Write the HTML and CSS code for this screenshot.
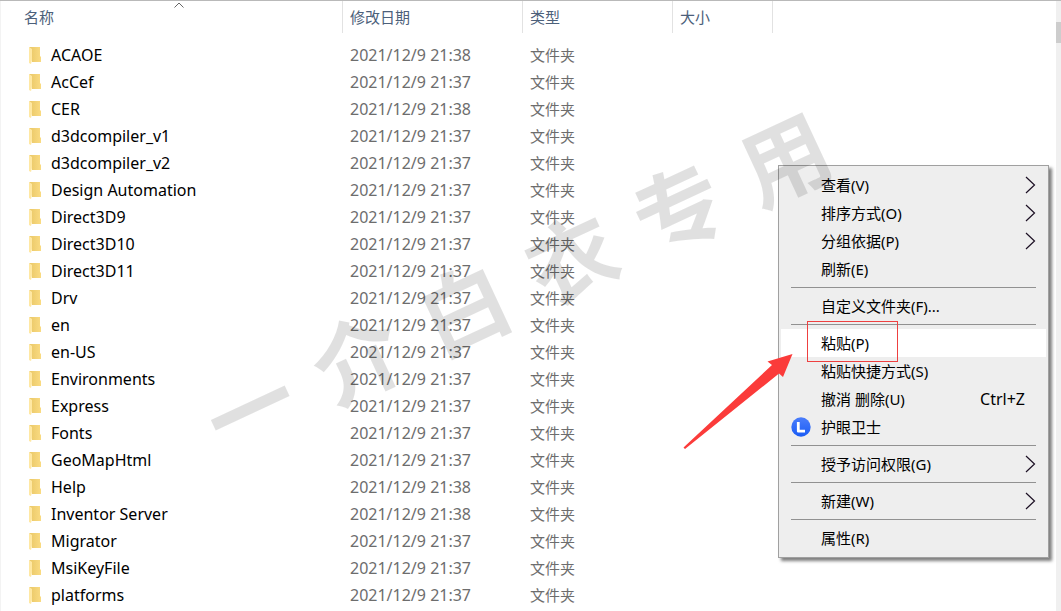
FILE: index.html
```html
<!DOCTYPE html>
<html lang="zh-CN">
<head>
<meta charset="utf-8">
<title>文件夹</title>
<link rel="stylesheet" href="styles.css">
</head>
<body>
<svg class="defs" aria-hidden="true">
  <defs>
    <linearGradient id="back" x1="0" x2="1"><stop offset="0" stop-color="#e9c766"/><stop offset="1" stop-color="#fadb82"/></linearGradient>
    <linearGradient id="blue" x1="0" x2="0" y1="0" y2="1"><stop offset="0" stop-color="#4a7dfb"/><stop offset="1" stop-color="#1a5cf5"/></linearGradient>
    <symbol id="folder" viewBox="0 0 13 18">
      <path d="M1 0h11v9l1 1v5H4V4z" fill="url(#back)"/>
      <path d="M1 0l3 2v11l-1 4-2-1z" fill="#ffe8a3"/>
    </symbol>
    <symbol id="chevron" viewBox="0 0 11 18"><path d="M1 1l8.500 8L1 17" fill="none" stroke="#1c1024" stroke-width="1.200"/></symbol>
  </defs>
</svg>
<div class="explorer">
  <main class="list">
    <table class="files">
      <thead>
        <tr>
          <th class="name" scope="col">名称<svg class="sort" viewBox="0 0 10 6" aria-hidden="true"><path d="M.500 5.500L5 1l4.500 4.500" fill="none" stroke="#666"/></svg></th>
          <th class="date" scope="col">修改日期</th>
          <th class="type" scope="col">类型</th>
          <th class="size" scope="col">大小</th>
        </tr>
      </thead>
      <tbody id="rows"></tbody>
    </table>
  </main>
  <div class="scrollbar"><div class="thumb"></div></div>

  <div class="menu" role="menu">
    <button class="item" role="menuitem">查看(V)<svg class="chevron"><use href="#chevron"/></svg></button>
    <button class="item" role="menuitem">排序方式(O)<svg class="chevron"><use href="#chevron"/></svg></button>
    <button class="item" role="menuitem">分组依据(P)<svg class="chevron"><use href="#chevron"/></svg></button>
    <button class="item" role="menuitem">刷新(E)</button>
    <hr class="rule">
    <button class="item" role="menuitem">自定义文件夹(F)...</button>
    <hr class="rule">
    <button class="item active" role="menuitem">粘贴(P)<span class="marker"></span></button>
    <button class="item" role="menuitem">粘贴快捷方式(S)</button>
    <button class="item" role="menuitem">撤消 删除(U)<span class="shortcut">Ctrl+Z</span></button>
    <button class="item" role="menuitem"><svg class="badge" viewBox="0 0 20 20" aria-hidden="true"><circle cx="10" cy="10" r="9.700" fill="url(#blue)"/><path d="M7.300 5v9.200H14" fill="none" stroke="#fff" stroke-width="2.800" stroke-linejoin="round"/></svg>护眼卫士</button>
    <hr class="rule">
    <button class="item" role="menuitem">授予访问权限(G)<svg class="chevron"><use href="#chevron"/></svg></button>
    <hr class="rule">
    <button class="item" role="menuitem">新建(W)<svg class="chevron"><use href="#chevron"/></svg></button>
    <hr class="rule">
    <button class="item" role="menuitem">属性(R)</button>
  </div>

  <div class="watermark"><span>一</span><span>介</span><span>白</span><span>衣</span><span>专</span><span>用</span></div>
  <svg class="arrow" viewBox="0 0 110 96" aria-hidden="true"><path d="M109.500 1L84.500 8.500 89 12 .500 94.500 2 96 96 20.500 100 24z" fill="#fb3b3a"/></svg>
</div>
<script src="files.js"></script>
</body>
</html>
```
FILE: styles.css
```css
* { box-sizing: border-box; }
body {
  margin: 0;
  background: #fff;
  font: 15px/27px "Noto Sans", "Noto Sans CJK SC", sans-serif;
  color: #000;
}
.defs { position: absolute; width: 0; height: 0; }
.explorer {
  position: relative;
  display: flex;
  height: 100vh;
  overflow: hidden;
  border-top: 1px solid #b9b9b9;
}
.list { flex: 1; border-left: 1px solid #f3f3f3; }
.files { border-collapse: separate; border-spacing: 0; table-layout: fixed; width: 772px; }
.files th {
  height: 32px;
  padding: 0 0 0 7px;
  border-right: 1px solid #e2e2e2;
  font-weight: 400;
  text-align: left;
  color: #4c607a;
}
.files th.name { position: relative; width: 342px; padding-left: 23px; }
.date { width: 180px; }
.type { width: 150px; }
.size { width: 100px; }
.sort { position: absolute; left: 173px; top: 1px; width: 10px; height: 6px; }
.files tbody::before { content: ""; display: block; height: 9px; }
.files td { height: 27px; padding: 0 0 0 7px; color: #6d6d6d; }
.files td.name { color: #000; padding-left: 27px; font-size: 16px; }
.files td.modified { font-size: 16px; }
.entry { display: flex; align-items: center; gap: 10px; }
.folder { width: 13px; height: 18px; }
.scrollbar { width: 5px; padding-top: 21px; background: #f0f0f0; }
.thumb { height: 21px; background: #cdcdcd; }

.menu {
  position: absolute;
  left: 778px;
  top: 164px;
  width: 271px;
  padding: 5px 2px;
  border: 1px solid #a0a0a0;
  background: #eee;
  box-shadow: 3px 3px 3px rgba(0, 0, 0, .5);
}
.item {
  position: relative;
  display: flex;
  align-items: center;
  width: 100%;
  height: 28px;
  padding: 0 10px 0 40px;
  border: 0;
  background: none;
  font: inherit;
  color: #000;
  text-align: left;
}
.active { background: #fff; }
.chevron { width: 11px; height: 18px; margin-left: auto; }
.shortcut { margin-left: auto; padding-right: 11px; font-size: 16px; }
.badge { position: absolute; left: 10px; top: 4px; width: 20px; height: 20px; }
.rule { height: 1px; margin: 4px 10px; border: 0; background: #919191; }
.marker {
  position: absolute;
  left: 26px;
  top: -8px;
  width: 91px;
  height: 41px;
  border: 1px solid #ee4040;
}
.watermark {
  position: absolute;
  left: 177px;
  top: 227px;
  display: flex;
  gap: 30px;
  font: 700 88px/104px "Noto Sans CJK SC", sans-serif;
  color: rgba(0, 0, 0, .12);
  transform: rotate(-25deg);
  pointer-events: none;
}
.arrow { position: absolute; left: 683px; top: 352px; width: 110px; height: 96px; pointer-events: none; }
```
FILE: files.js
```js
const files = [
  ["ACAOE", "21:38"], ["AcCef", "21:37"], ["CER", "21:38"],
  ["d3dcompiler_v1", "21:37"], ["d3dcompiler_v2", "21:37"],
  ["Design Automation", "21:37"], ["Direct3D9", "21:37"],
  ["Direct3D10", "21:37"], ["Direct3D11", "21:37"], ["Drv", "21:37"],
  ["en", "21:37"], ["en-US", "21:37"], ["Environments", "21:37"],
  ["Express", "21:37"], ["Fonts", "21:37"], ["GeoMapHtml", "21:37"],
  ["Help", "21:38"], ["Inventor Server", "21:38"], ["Migrator", "21:37"],
  ["MsiKeyFile", "21:37"], ["platforms", "21:37"],
];
document.getElementById("rows").innerHTML = files.map(([name, time]) => `
  <tr>
    <td class="name"><div class="entry"><svg class="folder" aria-hidden="true"><use href="#folder"/></svg>${name}</div></td>
    <td class="modified">2021/12/9 ${time}</td>
    <td>文件夹</td>
    <td></td>
  </tr>`).join("");
```
